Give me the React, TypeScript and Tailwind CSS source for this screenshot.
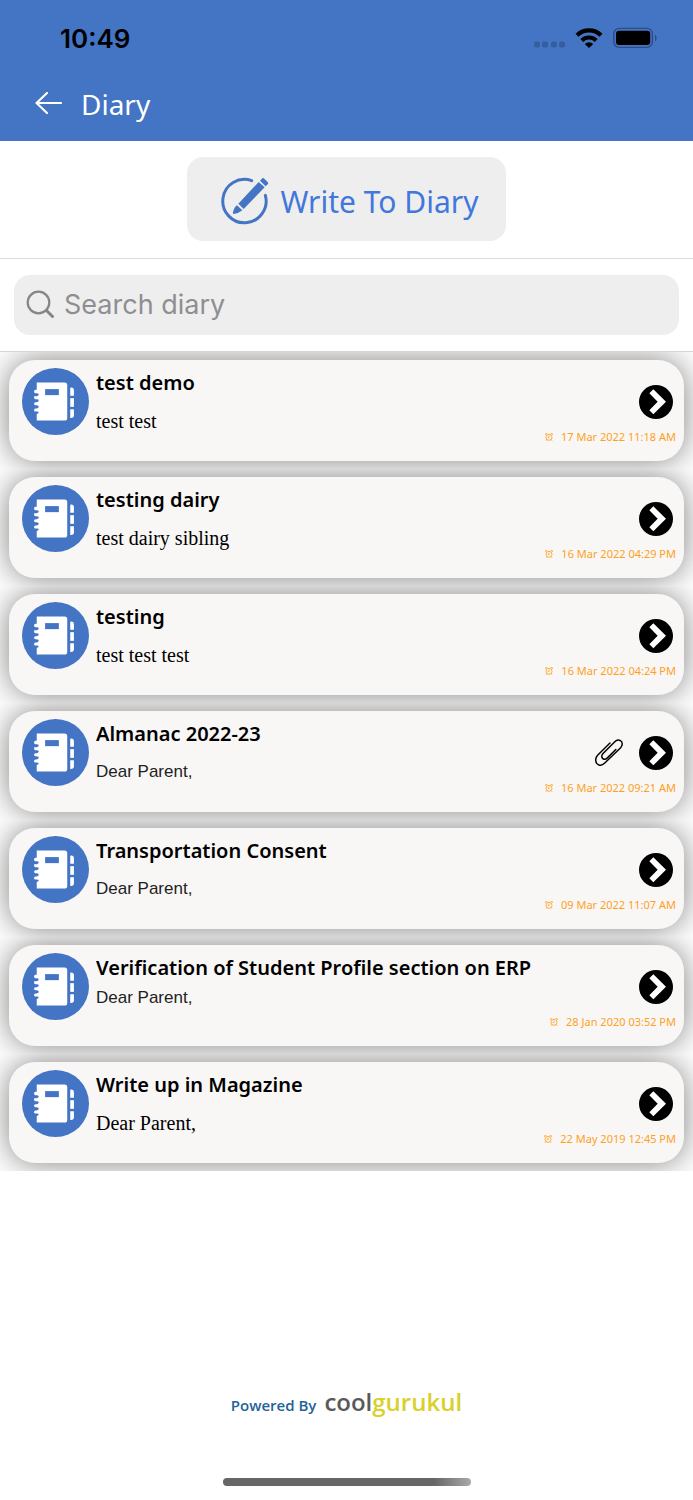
import { useState } from 'react';

type DiaryEntry = {
    id: number;
    title: string;
    preview: string;
    date: string;
    previewStyle: 'serif' | 'sans' | 'compact';
    hasAttachment?: boolean;
};

const entries: DiaryEntry[] = [
    { id: 1, title: 'test demo', preview: 'test test', date: '17 Mar 2022 11:18 AM', previewStyle: 'serif' },
    { id: 2, title: 'testing dairy', preview: 'test dairy sibling', date: '16 Mar 2022 04:29 PM', previewStyle: 'serif' },
    { id: 3, title: 'testing', preview: 'test test test', date: '16 Mar 2022 04:24 PM', previewStyle: 'serif' },
    { id: 4, title: 'Almanac 2022-23', preview: 'Dear Parent,', date: '16 Mar 2022 09:21 AM', previewStyle: 'sans', hasAttachment: true },
    { id: 5, title: 'Transportation Consent', preview: 'Dear Parent,', date: '09 Mar 2022 11:07 AM', previewStyle: 'sans' },
    { id: 6, title: 'Verification of Student Profile section on ERP', preview: 'Dear Parent,', date: '28 Jan 2020 03:52 PM', previewStyle: 'compact' },
    { id: 7, title: 'Write up in Magazine', preview: 'Dear Parent,', date: '22 May 2019 12:45 PM', previewStyle: 'serif' },
];

const previewClasses = {
    serif: "mt-2 text-[20px] text-black font-['Liberation_Serif',serif]",
    sans: "mt-2 text-[17px] text-[#222] font-['Liberation_Sans',sans-serif]",
    compact: "text-[17px] text-[#222] font-['Liberation_Sans',sans-serif]",
};

function StatusBar() {
    return (
        <div className="flex items-center justify-between h-19 pl-15 pr-9">
            <span className="text-[26px] font-semibold text-black font-['Inter',sans-serif]">10:49</span>
            <div className="flex items-center">
                <svg className="w-8 h-6 mr-2.5" viewBox="0 0 32 24" fill="#365d9d">
                    <rect x="1" y="15.5" width="6" height="6" rx="2" />
                    <rect x="9" y="15.5" width="6" height="6" rx="2" />
                    <rect x="18" y="15.5" width="6" height="6" rx="2" />
                    <rect x="26" y="15.5" width="6" height="6" rx="2" />
                </svg>
                <svg className="w-7 h-6 mr-2.5" viewBox="0 0 28 24" fill="none" stroke="black" strokeWidth="4.2">
                    <path d="M2 9.2a17.3 17.3 0 0 1 24 0" />
                    <path d="M6.8 14.4a10.4 10.4 0 0 1 14.4 0" />
                    <path d="M14 22l-4.2-4.1a6 6 0 0 1 8.4 0z" fill="black" stroke="none" />
                </svg>
                <svg className="w-11 h-6" viewBox="0 0 44 24">
                    <rect x="0.8" y="2.4" width="38.6" height="19" rx="5.5" fill="none" stroke="#2d4d83" strokeWidth="1.4" />
                    <rect x="3" y="4.8" width="34.2" height="14.2" rx="3" />
                    <path d="M42 8.8c2 .8 2 5.8 0 6.6z" fill="#2d4d83" />
                </svg>
            </div>
        </div>
    );
}

function WriteIcon() {
    return (
        <svg className="w-12 h-12" viewBox="0 0 144 144" fill="#4474c4">
            <path d="M92 11A65 65 0 1 0 133 55" fill="none" stroke="#4474c4" strokeWidth="9" strokeLinecap="round" />
            <path d="M52 80L113 15L131 31L68 96Z" />
            <path d="M117 11l7-7q3-2 6 1l10 10q3 3 1 6l-7 7z" />
            <path d="M48 85L64 100Q52 110 38 111Q34 110 36 106Q40 90 48 85Z" />
        </svg>
    );
}

function NotebookIcon() {
    return (
        <svg className="w-[67px] h-[67px] shrink-0" viewBox="0 0 200 200">
            <circle cx="100" cy="100" r="100" fill="#4474c4" />
            <path
                fill="white"
                d="M44 43H127q8 0 8 8V149q0 8-8 8H44V137q6-1 6-4t-6-3h-4q-4 0-4-4t4-5h4q6-1 6-5t-6-5h-4q-4 0-4-4t4-5h4q6-1 6-5t-6-4h-4q-4 0-4-5t4-4h4q6-1 6-5t-6-4h-4q-4 0-4-5t4-5h4z"
            />
            <rect x="69" y="63" width="41" height="18" fill="#4474c4" />
            <g fill="white">
                <path d="M144 59q11-3 11 7v17h-11z" />
                <path d="M144 90h11v26h-11z" />
                <path d="M144 123h11v18q0 9-11 8z" />
            </g>
        </svg>
    );
}

function PaperclipIcon() {
    return (
        <svg className="w-7 h-7" viewBox="0 0 86 84" fill="none" stroke="black" strokeWidth="4.5" strokeLinecap="round">
            <path d="M46 11L8 49C-2 60 2 76 12 79C18 81 24 79 30 73L78 27C86 18 85 8 78 4C72 1 65 3 60 8L24 44C18 51 21 59 27 61C31 62 35 60 38 57L64 31" />
        </svg>
    );
}

function ArrowCircleIcon() {
    return (
        <svg className="w-[34px] h-[34px]" viewBox="0 0 102 102">
            <circle cx="51" cy="51" r="51" />
            <path d="M43 13L81 50L43 88L31 76L56 50L31 25Z" fill="white" />
        </svg>
    );
}

function AlarmIcon() {
    return (
        <svg className="w-2 h-2" viewBox="0 0 24 24" fill="none" stroke="#ff9f1c" strokeWidth="2.5">
            <circle cx="12" cy="13" r="9" />
            <path d="M12 8v6H8M2 6V2h5M22 6V2h-5M5 20l-2 3M19 20l2 3" />
        </svg>
    );
}

function DiaryCard({ entry }: { entry: DiaryEntry }) {
    return (
        <li className="px-[9px] py-2 overflow-hidden">
            <article className="flex h-[101px] rounded-[26px] bg-[#f8f7f6] pl-[13px] pr-2 pt-2 shadow-[0_0_32px_rgba(0,0,0,0.5)]">
                <NotebookIcon />
                <div className="flex-1 min-w-0 pl-[7px]">
                    <h2 className="text-[20px] leading-[30px] font-semibold text-black truncate">{entry.title}</h2>
                    <p className={`leading-[30px] truncate ${previewClasses[entry.previewStyle]}`}>{entry.preview}</p>
                </div>
                <div className="flex flex-col items-end shrink-0">
                    <div className="flex items-center gap-4 h-[67px] pr-[3px]">
                        {entry.hasAttachment && <PaperclipIcon />}
                        <button type="button" aria-label={`Open ${entry.title}`}>
                            <ArrowCircleIcon />
                        </button>
                    </div>
                    <div className="flex items-center gap-2 text-[11px] leading-4 text-[#ff9f1c] -mt-1.5">
                        <AlarmIcon />
                        <time>{entry.date}</time>
                    </div>
                </div>
            </article>
        </li>
    );
}

export default function App() {
    const [query, setQuery] = useState('');
    const visible = entries.filter((e) => e.title.toLowerCase().includes(query.toLowerCase()));

    return (
        <div className="flex flex-col min-h-screen bg-white font-['Noto_Sans',sans-serif]">
            <header className="h-[141px] bg-[#4474c4]">
                <StatusBar />
                <div className="flex items-center gap-[19px] pl-8.5 h-14">
                    <button type="button" aria-label="Back">
                        <svg className="w-7 h-6" viewBox="0 0 28 24" fill="none" stroke="white" strokeWidth="2.2" strokeLinecap="round" strokeLinejoin="round">
                            <path d="M27 11H2.5M13 1L2.5 11L13 21" />
                        </svg>
                    </button>
                    <h1 className="text-[28px] leading-9 text-white">Diary</h1>
                </div>
            </header>

            <div className="flex justify-center pt-4 pb-[17px] border-b border-[#dcdcdc]">
                <button type="button" className="flex items-center gap-3 h-21 rounded-2xl bg-[#eee] pl-8.5 pr-7 pt-1 text-[30px] text-[#4277dc]">
                    <WriteIcon />
                    Write To Diary
                </button>
            </div>

            <div className="px-3.5 py-4 border-b border-[#d4d4d4]">
                <label className="flex items-center gap-2 h-15 rounded-2xl bg-[#eee] px-3">
                    <svg className="w-7.5 h-7.5 shrink-0" viewBox="0 0 30 30" fill="none" stroke="#85858a" strokeWidth="2.2" strokeLinecap="round">
                        <circle cx="12.5" cy="12.5" r="10.8" />
                        <path d="M20.5 20.5L26.5 26.5" strokeWidth="3" />
                    </svg>
                    <input
                        type="text"
                        aria-label="Search diary"
                        placeholder="Search diary"
                        value={query}
                        onChange={(e) => setQuery(e.target.value)}
                        className="flex-1 min-w-0 bg-transparent outline-none text-[27px] placeholder:text-[#8e8e93] font-['Inter',sans-serif]"
                    />
                </label>
            </div>

            <ul>
                {visible.map((entry) => (
                    <DiaryCard key={entry.id} entry={entry} />
                ))}
            </ul>

            <footer className="mt-auto flex flex-col items-center gap-15 pb-3.5">
                <p className="flex items-baseline gap-2 font-['Open_Sans',sans-serif]">
                    <span className="text-[15px] font-semibold text-[#1f6399]">Powered By</span>
                    <a href="#" className="text-[24px] leading-8 font-semibold text-[#595959]">
                        cool<span className="text-[#d9d02b]">gurukul</span>
                    </a>
                </p>
                <div className="w-62 h-2 rounded-full bg-linear-to-r from-[#666] from-85% to-[#aaa]" />
            </footer>
        </div>
    );
}
